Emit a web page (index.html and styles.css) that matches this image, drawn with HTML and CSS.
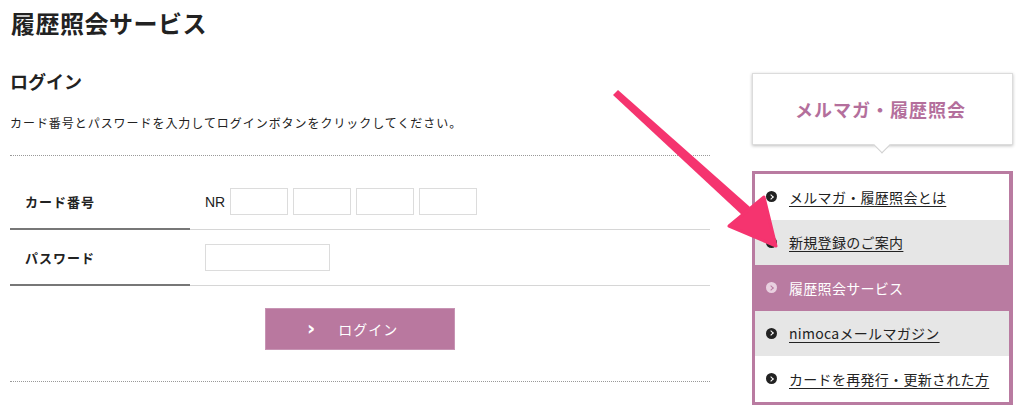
FILE: index.html
```html
<!DOCTYPE html>
<html lang="ja">
<head>
<meta charset="utf-8">
<title>履歴照会サービス</title>
<link rel="stylesheet" href="styles.css">
</head>
<body>
<div class="page">
  <main class="main">
    <h1 class="title">履歴照会サービス</h1>
    <h2 class="subtitle">ログイン</h2>
    <p class="desc">カード番号とパスワードを入力してログインボタンをクリックしてください。</p>
    <div class="form">
      <div class="row row-first">
        <div class="label">カード番号</div>
        <div class="value">
          <span class="nr">NR</span>
          <span class="inputs">
            <input class="field small" type="text">
            <input class="field small" type="text">
            <input class="field small" type="text">
            <input class="field small" type="text">
          </span>
        </div>
      </div>
      <div class="row">
        <div class="label">パスワード</div>
        <div class="value">
          <input class="field wide" type="password">
        </div>
      </div>
      <div class="actions">
        <button class="btn" type="button"><span class="chev">&#x203A;</span><span>ログイン</span></button>
      </div>
    </div>
  </main>
  <aside class="side">
    <div class="callout">
      <span class="callout-text">メルマガ・履歴照会</span>
      <span class="callout-tip"></span>
    </div>
    <ul class="menu">
      <li class="item white"><span class="dot"></span><a href="#">メルマガ・履歴照会とは</a></li>
      <li class="item gray"><span class="dot"></span><a href="#">新規登録のご案内</a></li>
      <li class="item active"><span class="dot"></span><span>履歴照会サービス</span></li>
      <li class="item gray"><span class="dot"></span><a href="#">nimocaメールマガジン</a></li>
      <li class="item white"><span class="dot"></span><a href="#">カードを再発行・更新された方</a></li>
    </ul>
  </aside>
  <svg class="arrow" width="1024" height="414" viewBox="0 0 1024 414">
    <polygon points="613,95 618,90 750,207 742,215" fill="#f5346f"/>
    <polygon points="729,226 764,197 776,246" fill="#f5346f" stroke="#f5346f" stroke-width="3" stroke-linejoin="round"/>
  </svg>
</div>
</body>
</html>
```

FILE: styles.css
```css
* { box-sizing: border-box; }
html, body { margin: 0; padding: 0; background: #fff; }
body {
  font-family: "Noto Sans CJK JP", "Noto Sans", "Liberation Sans", sans-serif;
  color: #222;
  width: 1024px;
  height: 414px;
  overflow: hidden;
}
.page {
  position: relative;
  display: flex;
  align-items: flex-start;
  padding-left: 10px;
}
.main { width: 700px; }
.title {
  margin: 0;
  padding-top: 8px;
  font-size: 24px;
  line-height: 30px;
  font-weight: 700;
  letter-spacing: 0.5px;
  padding-left: 1px;
}
.subtitle {
  margin: 31px 0 0;
  font-size: 18px;
  line-height: 24px;
  font-weight: 700;
}
.desc {
  margin: 21px 0 0;
  font-size: 12px;
  line-height: 18px;
  letter-spacing: 0.95px;
}
.form {
  margin-top: 23px;
  border-top: 1px dotted #999;
  border-bottom: 1px dotted #999;
  padding-top: 18px;
  padding-bottom: 31px;
}
.row {
  display: flex;
  align-items: stretch;
}
.label {
  width: 180px;
  flex: none;
  display: flex;
  align-items: center;
  padding-left: 15px;
  font-size: 13px;
  font-weight: 700;
  letter-spacing: 1px;
  border-bottom: 2px solid #777;
}
.value {
  flex: 1;
  display: flex;
  align-items: center;
  padding: 14px 0 14px 15px;
  border-bottom: 1px solid #d6d6d6;
}
.nr {
  font-family: "Liberation Sans", "Noto Sans", sans-serif;
  font-size: 14px;
  margin-right: 5px;
}
.inputs { display: flex; gap: 5px; }
.field {
  display: block;
  height: 27px;
  margin: 0;
  padding: 0;
  border: 1px solid #dcdcdc;
  background: #fff;
  outline: none;
}
.small { width: 58px; }
.wide { width: 125px; }
.actions {
  display: flex;
  justify-content: center;
  margin-top: 22px;
}
.btn {
  width: 190px;
  height: 42px;
  margin: 0;
  padding: 0 0 0 41px;
  border: 1px solid #c794b4;
  background: #b9789f;
  color: #fff;
  font-family: "Noto Sans CJK JP", "Noto Sans", sans-serif;
  font-size: 14px;
  letter-spacing: 1px;
  display: flex;
  align-items: center;
  gap: 22px;
  cursor: pointer;
}
.chev {
  font-family: "DejaVu Sans", sans-serif;
  font-weight: 700;
  font-size: 20px;
  line-height: 1;
  margin-top: -3px;
}
.side {
  width: 261px;
  margin-left: 42px;
  padding-top: 73px;
}
.callout {
  position: relative;
  height: 72px;
  border: 1px solid #dcdcdc;
  box-shadow: 0 1px 3px rgba(0,0,0,0.25);
  background: #fff;
  display: flex;
  align-items: center;
  justify-content: center;
}
.callout-text {
  color: #b46f9c;
  font-size: 18px;
  font-weight: 700;
  letter-spacing: 1px;
  margin-left: -4px;
}
.callout-tip {
  position: absolute;
  left: 123px;
  bottom: -7px;
  width: 12px;
  height: 12px;
  background: #fff;
  border-right: 1px solid #d0d0d0;
  border-bottom: 1px solid #d0d0d0;
  transform: rotate(45deg);
}
.menu {
  list-style: none;
  margin: 26px 0 0;
  padding: 0;
  border: 3px solid #b97ba1;
  border-right-width: 4px;
}
.item {
  height: 45.5px;
  display: flex;
  align-items: center;
  padding-left: 11px;
  font-size: 14px;
  letter-spacing: 0.3px;
}
.item a { color: #222; text-decoration: underline; text-underline-offset: 3px; }
.white { background: #fff; }
.gray { background: #e6e6e6; }
.active { background: #b97ba1; color: #fff; }
.dot {
  position: relative;
  width: 11px;
  height: 11px;
  border-radius: 50%;
  background: #222;
  margin-right: 12px;
  flex: none;
}
.dot::after {
  content: "";
  position: absolute;
  left: 2.5px;
  top: 3.5px;
  width: 3px;
  height: 3px;
  border-top: 1.5px solid #fff;
  border-right: 1.5px solid #fff;
  transform: rotate(45deg);
}
.active .dot { background: #e9d0e0; }
.active .dot::after { border-color: #b97ba1; }
.arrow {
  position: absolute;
  left: 0;
  top: 0;
  pointer-events: none;
}
```
